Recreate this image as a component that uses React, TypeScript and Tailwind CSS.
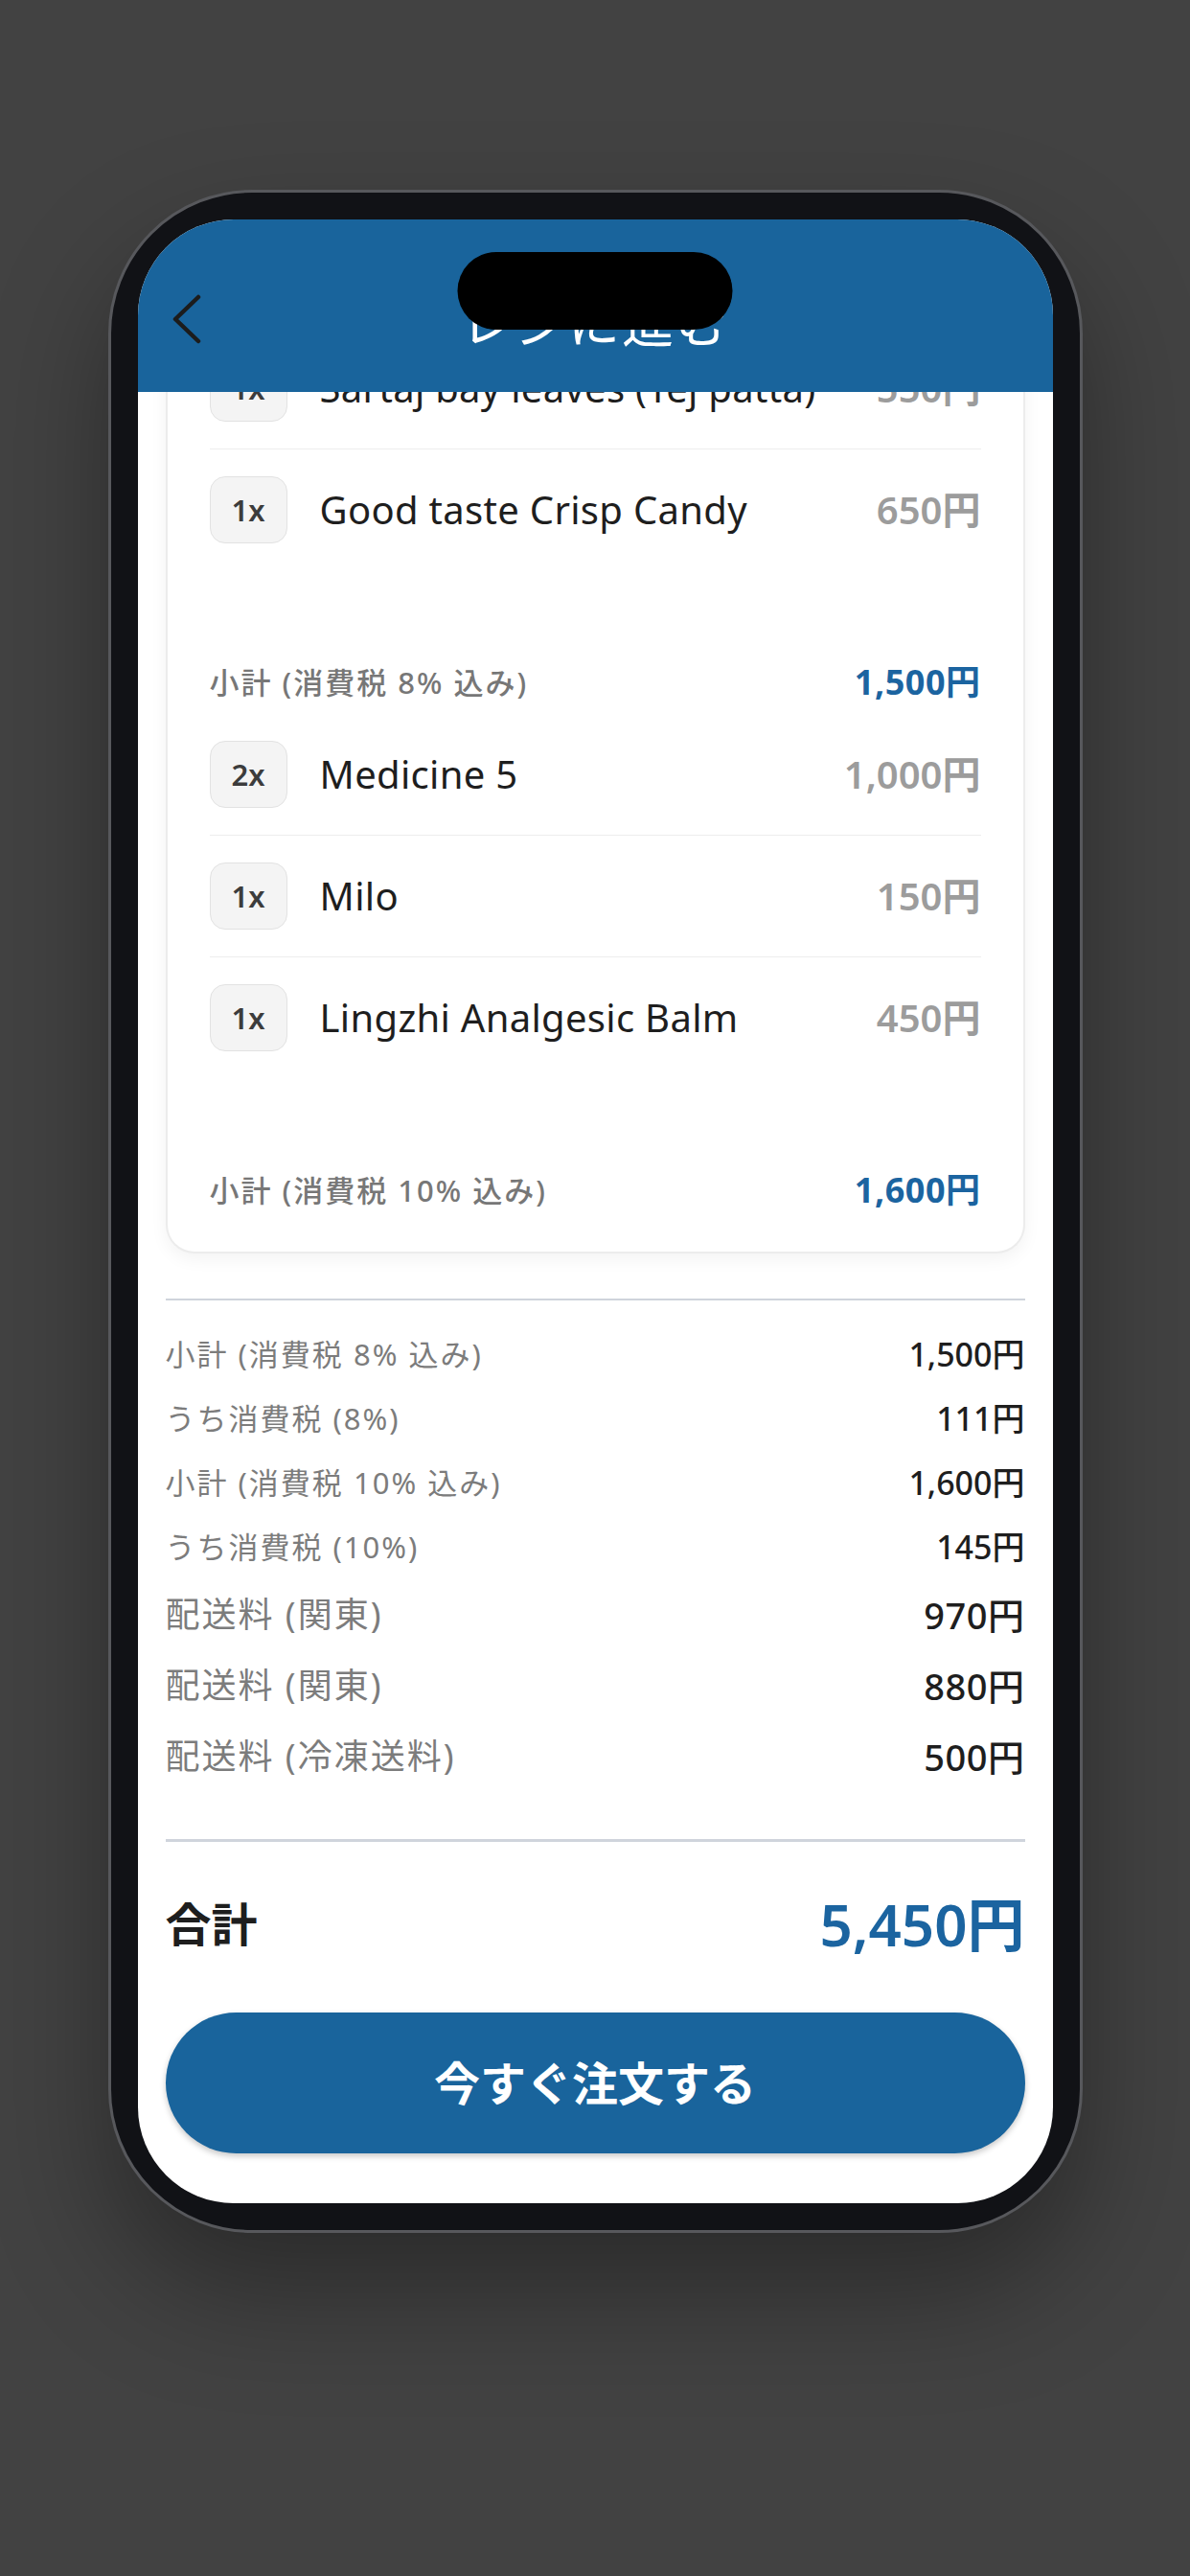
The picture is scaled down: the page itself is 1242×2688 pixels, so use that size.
import React from 'react';

type Item = { qty: string; name: string; price: string };
type Group = { items: Item[]; label: string; total: string };

const groups: Group[] = [
  {
    items: [
      { qty: '1x', name: 'Sartaj bay leaves (Tej patta)', price: '550円' },
      { qty: '1x', name: 'Good taste Crisp Candy', price: '650円' },
    ],
    label: '小計 (消費税 8% 込み)',
    total: '1,500円',
  },
  {
    items: [
      { qty: '2x', name: 'Medicine 5', price: '1,000円' },
      { qty: '1x', name: 'Milo', price: '150円' },
      { qty: '1x', name: 'Lingzhi Analgesic Balm', price: '450円' },
    ],
    label: '小計 (消費税 10% 込み)',
    total: '1,600円',
  },
];

const taxRows = [
  ['小計 (消費税 8% 込み)', '1,500円'],
  ['うち消費税 (8%)', '111円'],
  ['小計 (消費税 10% 込み)', '1,600円'],
  ['うち消費税 (10%)', '145円'],
];

const shippingRows = [
  ['配送料 (関東)', '970円'],
  ['配送料 (関東)', '880円'],
  ['配送料 (冷凍送料)', '500円'],
];

const ItemRow = ({ item, last }: { item: Item; last: boolean }) => (
  <div className={`flex items-center py-[28px] ${last ? '' : 'border-b border-[#ededed]'}`}>
    <div className="h-[70px] px-[22px] flex items-center rounded-[16px] bg-[#f4f4f4] border border-[#e2e2e2] text-[31px] font-semibold text-[#3c3c3c]">
      {item.qty}
    </div>
    <span className="ml-[34px] flex-1 text-[40px] text-[#1e1e1e] tracking-[0.3px]">{item.name}</span>
    <span className="text-[40px] font-semibold text-[#9c9c9c]">{item.price}</span>
  </div>
);

export default function App() {
  return (
    <div className="min-h-[2688px] bg-[#424242] flex justify-center pt-[198px] font-['Noto_Sans','Noto_Sans_CJK_JP',sans-serif]">
      <div className="w-[1017px] h-[2132px] rounded-[150px] border-[3px] border-[#57585c] bg-[#111216] p-[28px] shadow-[0_60px_120px_rgba(0,0,0,0.35)]">
        <div className="relative h-full rounded-[100px] overflow-hidden bg-white flex flex-col">
          {/* header */}
          <div className="h-[180px] shrink-0 bg-[#19649c] pt-[74px] px-[36px] relative z-10">
            <div className="h-[60px] flex items-center justify-center relative">
              <svg className="absolute left-0 top-1/2 -translate-y-1/2" width="30" height="52" viewBox="0 0 30 52">
                <polyline points="27,3 3,26 27,49" fill="none" stroke="#1c1c1c" strokeWidth="4.5" strokeLinecap="round" strokeLinejoin="round" />
              </svg>
              <span className="mt-[8px] text-[54px] text-white leading-none tracking-[2px]">レジに進む</span>
            </div>
          </div>
          <div className="absolute top-[34px] left-1/2 -translate-x-1/2 w-[287px] h-[81px] rounded-full bg-black z-20" />

          {/* scrolled content */}
          <div className="flex-1 overflow-hidden px-[29px]">
            <div className="-mt-[67px]">
              <div className="rounded-b-[30px] border-2 border-t-0 border-[#ececec] bg-white px-[44px] pb-[31px] shadow-[0_6px_18px_rgba(0,0,0,0.05)]">
                {groups.map((g, gi) => (
                  <div key={gi}>
                    {g.items.map((it, i) => (
                      <ItemRow key={i} item={it} last={i === g.items.length - 1} />
                    ))}
                    <div className="mt-[97px] mb-[13px] h-[40px] flex items-center justify-between">
                      <span className="text-[31px] font-medium text-[#777777] tracking-[2px]">{g.label}</span>
                      <span className="text-[36px] font-bold text-[#1b64a0] tracking-[0.5px]">{g.total}</span>
                    </div>
                  </div>
                ))}
              </div>

              <div className="mt-[47px] h-[2px] bg-[#cfd4dc]" />
              <div className="mt-[23px]">
                {taxRows.map(([l, v], i) => (
                  <div key={i} className="h-[67px] flex items-center justify-between">
                    <span className="text-[31px] text-[#7c7c7c] tracking-[2px]">{l}</span>
                    <span className="text-[34px] font-medium text-[#1e1e1e]">{v}</span>
                  </div>
                ))}
                {shippingRows.map(([l, v], i) => (
                  <div key={i} className="h-[74px] flex items-center justify-between">
                    <span className="text-[36px] text-[#7c7c7c] tracking-[2px]">{l}</span>
                    <span className="text-[38px] font-medium text-[#1e1e1e] tracking-[0.5px]">{v}</span>
                  </div>
                ))}
              </div>

              <div className="mt-[49px] h-[3px] bg-[#cfd4dc]" />
              <div className="mt-[46px] h-[80px] flex items-center justify-between">
                <span className="text-[48px] font-bold text-[#1e1e1e]">合計</span>
                <span className="text-[60px] font-semibold text-[#1b64a0]">5,450円</span>
              </div>

              <button className="mt-[52px] w-full h-[147px] rounded-full bg-[#19649c] text-white text-[48px] font-semibold shadow-[0_3px_6px_rgba(0,0,0,0.22)]">
                今すぐ注文する
              </button>
            </div>
          </div>
        </div>
      </div>
    </div>
  );
}
